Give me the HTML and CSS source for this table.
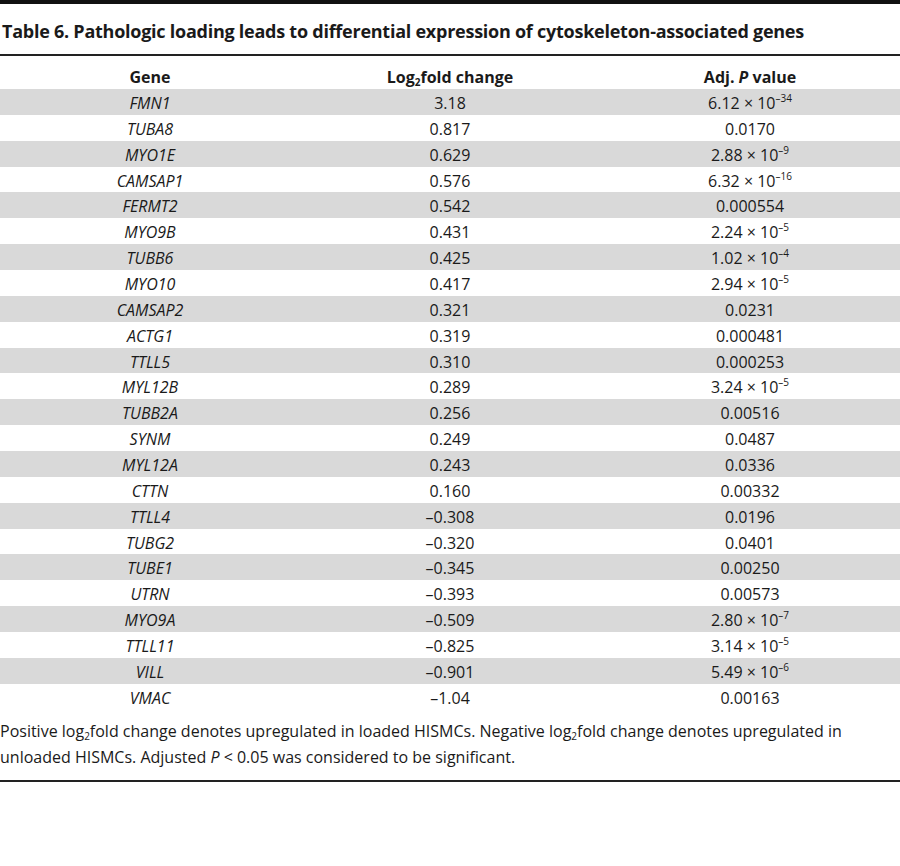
FILE: index.html
```html
<!DOCTYPE html>
<html>
<head>
<meta charset="utf-8">
<link rel="stylesheet" href="styles.css">
</head>
<body>
<div class="topbar"></div>
<h1 class="title">Table 6. Pathologic loading leads to differential expression of cytoskeleton-associated genes</h1>
<table class="data">
<thead>
<tr><th>Gene</th><th>Log<sub>2</sub>fold change</th><th>Adj. <i>P</i> value</th></tr>
</thead>
<tbody>
<tr><td><i>FMN1</i></td><td>3.18</td><td>6.12 × 10<sup>–34</sup></td></tr>
<tr><td><i>TUBA8</i></td><td>0.817</td><td>0.0170</td></tr>
<tr><td><i>MYO1E</i></td><td>0.629</td><td>2.88 × 10<sup>–9</sup></td></tr>
<tr><td><i>CAMSAP1</i></td><td>0.576</td><td>6.32 × 10<sup>–16</sup></td></tr>
<tr><td><i>FERMT2</i></td><td>0.542</td><td>0.000554</td></tr>
<tr><td><i>MYO9B</i></td><td>0.431</td><td>2.24 × 10<sup>–5</sup></td></tr>
<tr><td><i>TUBB6</i></td><td>0.425</td><td>1.02 × 10<sup>–4</sup></td></tr>
<tr><td><i>MYO10</i></td><td>0.417</td><td>2.94 × 10<sup>–5</sup></td></tr>
<tr><td><i>CAMSAP2</i></td><td>0.321</td><td>0.0231</td></tr>
<tr><td><i>ACTG1</i></td><td>0.319</td><td>0.000481</td></tr>
<tr><td><i>TTLL5</i></td><td>0.310</td><td>0.000253</td></tr>
<tr><td><i>MYL12B</i></td><td>0.289</td><td>3.24 × 10<sup>–5</sup></td></tr>
<tr><td><i>TUBB2A</i></td><td>0.256</td><td>0.00516</td></tr>
<tr><td><i>SYNM</i></td><td>0.249</td><td>0.0487</td></tr>
<tr><td><i>MYL12A</i></td><td>0.243</td><td>0.0336</td></tr>
<tr><td><i>CTTN</i></td><td>0.160</td><td>0.00332</td></tr>
<tr><td><i>TTLL4</i></td><td>–0.308</td><td>0.0196</td></tr>
<tr><td><i>TUBG2</i></td><td>–0.320</td><td>0.0401</td></tr>
<tr><td><i>TUBE1</i></td><td>–0.345</td><td>0.00250</td></tr>
<tr><td><i>UTRN</i></td><td>–0.393</td><td>0.00573</td></tr>
<tr><td><i>MYO9A</i></td><td>–0.509</td><td>2.80 × 10<sup>–7</sup></td></tr>
<tr><td><i>TTLL11</i></td><td>–0.825</td><td>3.14 × 10<sup>–5</sup></td></tr>
<tr><td><i>VILL</i></td><td>–0.901</td><td>5.49 × 10<sup>–6</sup></td></tr>
<tr><td><i>VMAC</i></td><td>–1.04</td><td>0.00163</td></tr>
</tbody>
</table>
<p class="note">Positive log<sub>2</sub>fold change denotes upregulated in loaded HISMCs. Negative log<sub>2</sub>fold change denotes upregulated in unloaded HISMCs. Adjusted <i>P</i> &lt; 0.05 was considered to be significant.</p>
</body>
</html>
```
FILE: styles.css
```css
html, body {
  margin: 0;
  padding: 0;
  background: #fff;
}
body {
  font-family: "Open Sans", "Liberation Sans", sans-serif;
  color: #1a1a1a;
  width: 900px;
}
.topbar {
  height: 4px;
  background: #111;
}
.title {
  margin: 0;
  padding: 14px 0 0 2px;
  box-sizing: border-box;
  height: 52px;
  font-size: 18px;
  line-height: 26px;
  font-weight: 700;
  letter-spacing: -0.25px;
  border-bottom: 2px solid #222;
}
.data {
  width: 900px;
  border-collapse: collapse;
  table-layout: fixed;
}
.data th, .data td {
  width: 300px;
  text-align: center;
  padding: 0;
  font-size: 16px;
}
.data th {
  height: 33px;
  font-weight: 700;
  vertical-align: middle;
  padding-top: 8px;
  box-sizing: border-box;
  line-height: 20px;
}
.data td {
  height: 25.87px;
  line-height: 20px;
  padding-top: 2px;
  box-sizing: border-box;
  vertical-align: middle;
  font-weight: 400;
}
.data tbody tr:nth-child(odd) {
  background: #d9d9d9;
}
sub, sup {
  font-size: 10px;
  line-height: 0;
  position: relative;
  vertical-align: baseline;
}
sup { top: -7px; }
sub { top: 3px; }
.note {
  margin: 0;
  padding: 8px 0 10px 0;
  font-size: 16px;
  line-height: 26px;
  border-bottom: 2px solid #222;
}
```
